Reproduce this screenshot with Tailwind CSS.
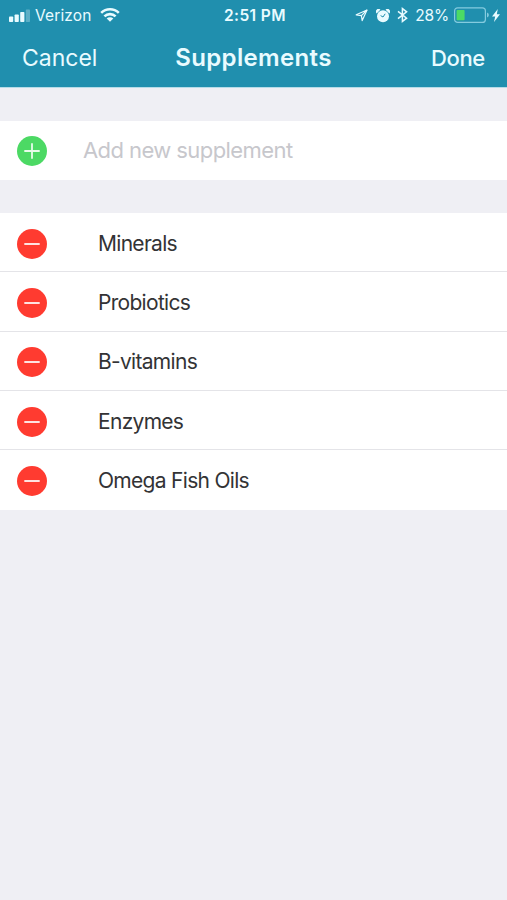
<!DOCTYPE html>
<html lang="en">
  <head>
    <meta charset="UTF-8" />
    <meta name="viewport" content="width=device-width, initial-scale=1.0" />
    <title>Supplements</title>
    <script src="https://cdn.jsdelivr.net/npm/@tailwindcss/browser@4"></script>
  </head>
  <body class="bg-[#efeff4] min-h-screen font-['Inter',sans-serif] text-[#333335]">
    <!-- Header -->
    <header class="h-[88px] bg-[#208fae] border-b border-[#b5dce8] text-[#e9fbff]">
      <!-- Status bar -->
      <div class="h-[30px] grid grid-cols-[1fr_auto_1fr] items-center pl-[9px] pr-[7px] text-[15.5px] leading-[30px]">
        <div class="flex items-center">
          <svg class="w-[22px] h-[14px]" viewBox="0 0 22 14" fill="currentColor">
            <rect x="0" y="7.5" width="4.2" height="5.5" rx="0.8" />
            <rect x="5.6" y="5.5" width="4.2" height="7.5" rx="0.8" />
            <rect x="11.2" y="3" width="4.2" height="10" rx="0.8" />
            <rect x="16.8" y="0.6" width="4.2" height="12.4" rx="0.8" opacity="0.3" />
          </svg>
          <span class="ml-[4px] pt-px tracking-[0.15px]">Verizon</span>
          <svg class="ml-[8px] mb-[2px] w-[20px] h-[14px]" viewBox="0 0 20 14" fill="none" stroke="currentColor" stroke-width="2.6">
            <path d="M1.2 4.9a12.6 12.6 0 0 1 17.6 0" />
            <path d="M4.4 8.4a8 8 0 0 1 11.2 0" />
            <path d="M10 13.8L6.7 10.5a4.7 4.7 0 0 1 6.6 0z" fill="currentColor" stroke="none" />
          </svg>
        </div>
        <span class="pl-px pt-px font-semibold tracking-[0.4px]">2:51 PM</span>
        <div class="flex items-center justify-end">
          <svg class="w-[13px] h-[13px]" viewBox="0 0 13 13" fill="none" stroke="currentColor" stroke-width="1.2" stroke-linejoin="round">
            <path d="M12 1L7.2 11.6L6.4 6.6L1.2 5.8z" />
            <path d="M12 1L6.4 6.6" />
          </svg>
          <svg class="ml-[8px] w-[14px] h-[14px]" viewBox="0 0 14 14">
            <path d="M0.6 4.4A2.5 2.5 0 0 1 4.4 0.7zM13.4 4.4A2.5 2.5 0 0 0 9.6 0.7z" fill="currentColor" />
            <circle cx="7" cy="7.3" r="6" fill="currentColor" />
            <path d="M4.6 6.6L7 8L9.2 4.8" stroke="#208fae" stroke-width="1" fill="none" />
          </svg>
          <svg class="ml-[7px] mb-px w-[11px] h-[16px]" viewBox="0 0 11 16" fill="none" stroke="currentColor" stroke-width="1.5">
            <path d="M1 4.4L9.6 11.2L5.4 14.4V1.6L9.6 4.8L1 11.6" />
          </svg>
          <span class="ml-[7px] pt-px tracking-[-0.2px]">28%</span>
          <svg class="ml-[5px] mb-px w-[35px] h-[17px]" viewBox="0 0 35 17" fill="none">
            <rect x="0.6" y="0.8" width="30.8" height="14.6" rx="3" stroke="#84cbdf" stroke-width="1.2" />
            <rect x="2.6" y="2.9" width="8" height="10.4" rx="0.8" fill="#4cdb64" />
            <path d="M33 5.6a2.6 2.6 0 0 1 0 5z" fill="#84cbdf" />
          </svg>
          <svg class="ml-[3px] mb-px w-[8px] h-[13px]" viewBox="0 0 8 13" fill="currentColor">
            <path d="M5.8 0L0 7.4H3.2L2 13L8 5.2H4.8z" />
          </svg>
        </div>
      </div>
      <!-- Navigation bar -->
      <div class="h-[56px] grid grid-cols-[1fr_auto_1fr] items-center px-[22px] text-[23px]">
        <button class="justify-self-start">Cancel</button>
        <h1 class="text-[24px] font-semibold tracking-[0.35px]">Supplements</h1>
        <button class="justify-self-end pt-px text-[22px] font-medium tracking-[-0.3px]">Done</button>
      </div>
    </header>

    <main class="pt-[33px]">
      <!-- Add row -->
      <div class="flex items-center h-[59px] pl-[17px] bg-white">
        <svg class="w-[30px] h-[30px]" viewBox="0 0 30 30">
          <circle cx="15" cy="15" r="15" fill="#4cd964" />
          <path d="M7.3 15H22.7M15 7.3V22.7" stroke="#e8fbea" stroke-width="1.8" />
        </svg>
        <span class="ml-[36px] text-[22px] tracking-[-0.58px] text-[#c7c7cc]">Add new supplement</span>
      </div>

      <!-- Supplement list -->
      <ul id="supplements" class="mt-[33px] bg-white"></ul>
    </main>

    <script>
      const supplements = ["Minerals", "Probiotics", "B-vitamins", "Enzymes", "Omega Fish Oils"];

      const list = document.getElementById('supplements');
      supplements.forEach(name => {
        const li = document.createElement('li');
        li.className = "flex items-center h-[59.3px] pl-[17px] pt-[3px] border-b border-[#e4e4e8] last:border-b-0 last:h-[60px] last:pb-px";
        li.innerHTML = `<svg class="w-[30px] h-[30px]" viewBox="0 0 30 30"><circle cx="15" cy="15" r="15" fill="#ff3b30" /><path d="M7.3 15H22.7" stroke="#ffe3e1" stroke-width="2" /></svg><span class="ml-[51px] text-[21px] tracking-[-0.7px]">${name}</span>`;
        list.appendChild(li);
      });
    </script>
  </body>
</html>
